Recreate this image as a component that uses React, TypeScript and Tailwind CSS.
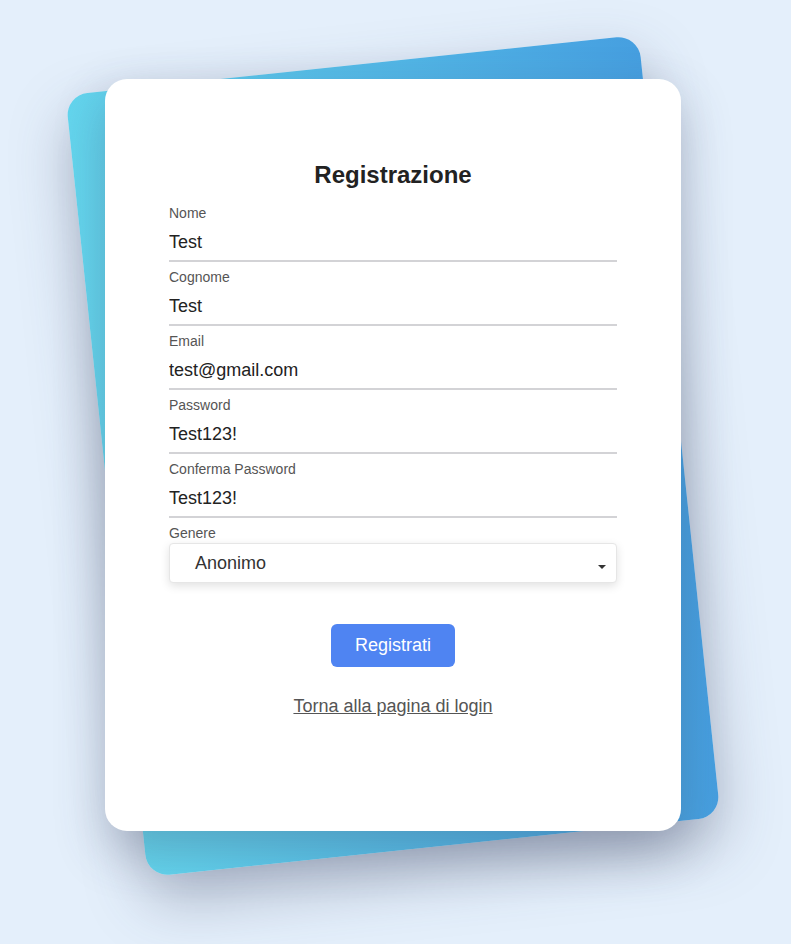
import React from "react";

const fields = [
  { label: "Nome", value: "Test", type: "text" },
  { label: "Cognome", value: "Test", type: "text" },
  { label: "Email", value: "test@gmail.com", type: "email" },
  { label: "Password", value: "Test123!", type: "text" },
  { label: "Conferma Password", value: "Test123!", type: "text" },
];

export default function App() {
  return (
    <div
      className="min-h-screen w-full bg-[#e4effb] overflow-hidden"
      style={{ fontFamily: '"Liberation Sans", Arial, sans-serif' }}
    >
      <div className="relative ml-[105px] mt-[79px] w-[576px] h-[752px]">
        <div className="absolute left-0 top-[-16px] w-[576px] h-[786px] rotate-[-6deg] rounded-[22px] bg-linear-to-r from-[#64d6ee] to-[#469fe0] shadow-[0_25px_60px_rgba(60,70,100,0.35)]" />
        <div className="relative w-full h-full bg-white rounded-[22px] shadow-[0_20px_50px_rgba(60,70,100,0.3)] px-16 pt-20 flex flex-col">
          <h1 className="text-center text-[24px] leading-8 font-bold text-[#222]">Registrazione</h1>
          <div className="mt-3 flex flex-col gap-[5px]">
            {fields.map((f) => (
              <div key={f.label} className="flex flex-col">
                <label className="text-[14px] leading-5 text-[#555]">{f.label}</label>
                <input
                  readOnly
                  value={f.value}
                  className="h-[39px] pt-[1px] border-b-2 border-[#d3d3d6] text-[18px] text-[#222] outline-none bg-transparent"
                />
              </div>
            ))}
            <div className="flex flex-col">
              <label className="text-[14px] leading-5 text-[#555]">Genere</label>
              <div className="relative h-10 rounded-[4px] border border-[#e6e6e6] bg-white shadow-[0_3px_10px_rgba(0,0,0,0.12)] flex items-center pl-[25px]">
                <span className="text-[18px] text-[#333]">Anonimo</span>
                <span className="absolute right-[10px] top-[21px] w-0 h-0 border-l-[4px] border-r-[4px] border-t-[4px] border-l-transparent border-r-transparent border-t-[#333]" />
              </div>
            </div>
          </div>
          <div className="mt-[41px] flex justify-center">
            <button className="w-[124px] h-[43px] rounded-[6px] bg-[#4f84f2] text-white text-[18px]">
              Registrati
            </button>
          </div>
          <div className="mt-[27px] flex justify-center">
            <a className="text-[18px] leading-6 text-[#555] underline cursor-pointer">Torna alla pagina di login</a>
          </div>
        </div>
      </div>
    </div>
  );
}
